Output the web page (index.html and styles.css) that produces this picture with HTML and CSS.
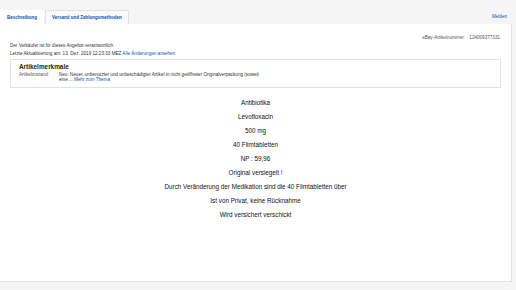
FILE: index.html
```html
<!DOCTYPE html>
<html lang="de">
<head>
  <meta charset="UTF-8" />
  <title>Beschreibung</title>
  <link rel="stylesheet" href="styles.css">
</head>
<body>
  <div class="page">
    <div class="tabbar">
      <div class="tabs">
        <a class="tab tab-active">Beschreibung</a>
        <a class="tab">Versand und Zahlungsmethoden</a>
      </div>
      <a class="report">Melden</a>
    </div>

    <div class="panel">
      <div class="item-no">eBay-Artikelnummer: <span>124009377331</span></div>
      <p class="meta">Der Verkäufer ist für dieses Angebot verantwortlich.</p>
      <p class="meta">Letzte Aktualisierung am: 13. Dez. 2019 12:23:33 MEZ <a>Alle Änderungen ansehen</a></p>

      <div class="specs">
        <h2>Artikelmerkmale</h2>
        <div class="spec-row">
          <span class="spec-label">Artikelzustand:</span>
          <span class="spec-value">Neu: Neuer, unbenutzter und unbeschädigter Artikel in nicht geöffneter Originalverpackung (soweit<br>eine ... <a>Mehr zum Thema</a></span>
        </div>
      </div>

      <div class="description">
        <p>Antibiotika</p>
        <p>Levofloxacin</p>
        <p>500 mg</p>
        <p>40 Filmtabletten</p>
        <p>NP : 59,96</p>
        <p>Original versiegelt !</p>
        <p>Durch Veränderung der Medikation sind die 40 Filmtabletten über</p>
        <p>Ist von Privat, keine Rücknahme</p>
        <p>Wird versichert verschickt</p>
      </div>
    </div>
  </div>
</body>
</html>
```

FILE: styles.css
```css
:root {
  --link: #0654ba;
  --text: #333;
  --border: #e2e2e2;
  --bg: #f5f5f5;
}

* {
  margin: 0;
  padding: 0;
  box-sizing: border-box;
}

body {
  font-family: "Liberation Sans", Arial, sans-serif;
  background: var(--bg);
  color: var(--text);
}

a {
  color: var(--link);
  text-decoration: none;
}

.page {
  width: 512px;
  padding-top: 10px;
}

.tabbar {
  display: flex;
  justify-content: space-between;
  align-items: flex-end;
  height: 14px;
}

.tabs {
  display: flex;
  gap: 1px;
  height: 14px;
}

.tab {
  display: flex;
  align-items: center;
  padding: 0 6px;
  font-size: 4.5px;
  font-weight: bold;
  background: #fafafa;
  border: 1px solid var(--border);
  border-bottom: none;
}

.tab-active {
  background: #fff;
  border-color: #fff;
}

.report {
  font-size: 4.6px;
  margin: 0 5px 5px 0;
}

.panel {
  background: #fff;
  border: 1px solid var(--border);
  border-top: none;
  border-left: none;
  height: 258px;
  padding: 11px 10px 0 10px;
}

.item-no {
  text-align: right;
  font-size: 4.6px;
  color: #555;
  padding-right: 1px;
  margin-bottom: 2px;
}

.item-no span {
  margin-left: 3px;
}

.meta {
  font-size: 4.6px;
  line-height: 8px;
}

.specs {
  margin-top: 1px;
  border: 1px solid var(--border);
  height: 29px;
  padding: 3px 8px 0;
}

.specs h2 {
  font-size: 6.4px;
  font-weight: bold;
  color: #222;
  line-height: 8px;
  margin-bottom: 2px;
}

.spec-row {
  display: flex;
  font-size: 4.6px;
  line-height: 4.6px;
}

.spec-label {
  width: 40px;
  flex-shrink: 0;
  color: #555;
}

.description {
  margin-top: 8px;
  text-align: center;
  color: #111;
  font-size: 6.3px;
}

.description p {
  line-height: 14px;
}
```
